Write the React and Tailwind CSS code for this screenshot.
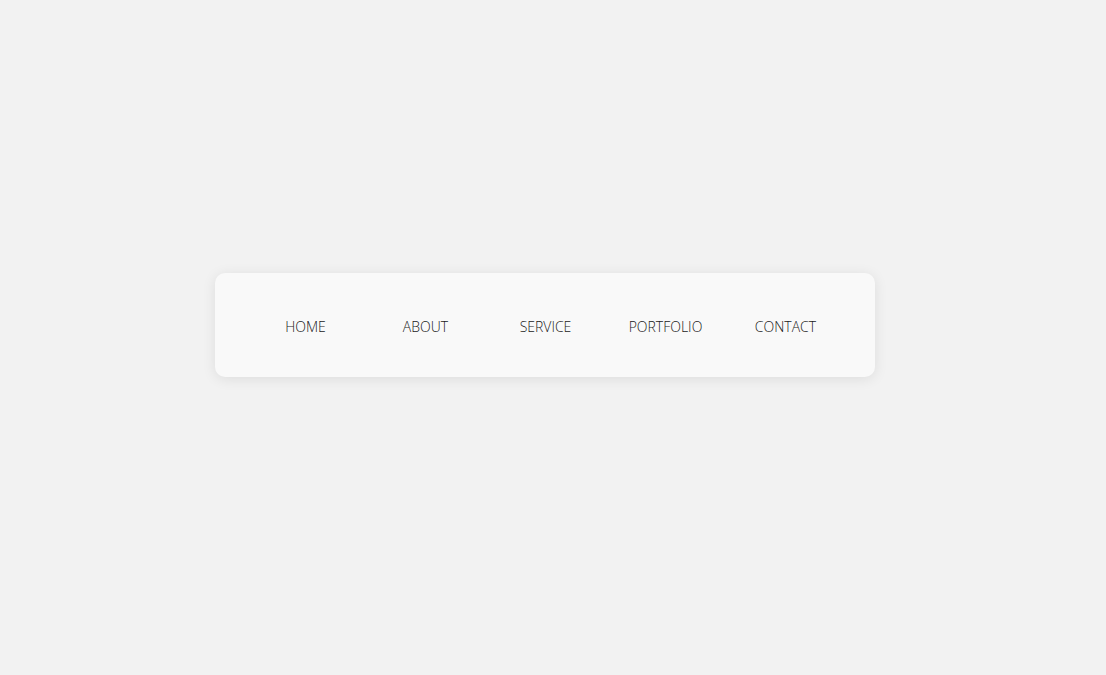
import React from "react";

const items = ["HOME", "ABOUT", "SERVICE", "PORTFOLIO", "CONTACT"];

const App = () => {
	return (
		<div className="w-[1106px] h-[675px] pr-[17px] pb-[26px] bg-[#f2f2f2] flex items-center justify-center font-['Open_Sans',sans-serif]">
			{/* Barra de navegação */}
			<nav className="w-[660px] h-[104px] pl-[31px] pr-[29px] pt-[3px] flex items-center bg-[#f9f9f9] rounded-[10px] shadow-[0_2px_14px_rgba(0,0,0,0.09)]">
				{items.map((item) => (
					<a
						key={item}
						href="#"
						className="w-[120px] text-center text-[14px] font-light text-[#1a1a1a]"
					>
						{item}
					</a>
				))}
			</nav>
		</div>
	);
};

export default App;
